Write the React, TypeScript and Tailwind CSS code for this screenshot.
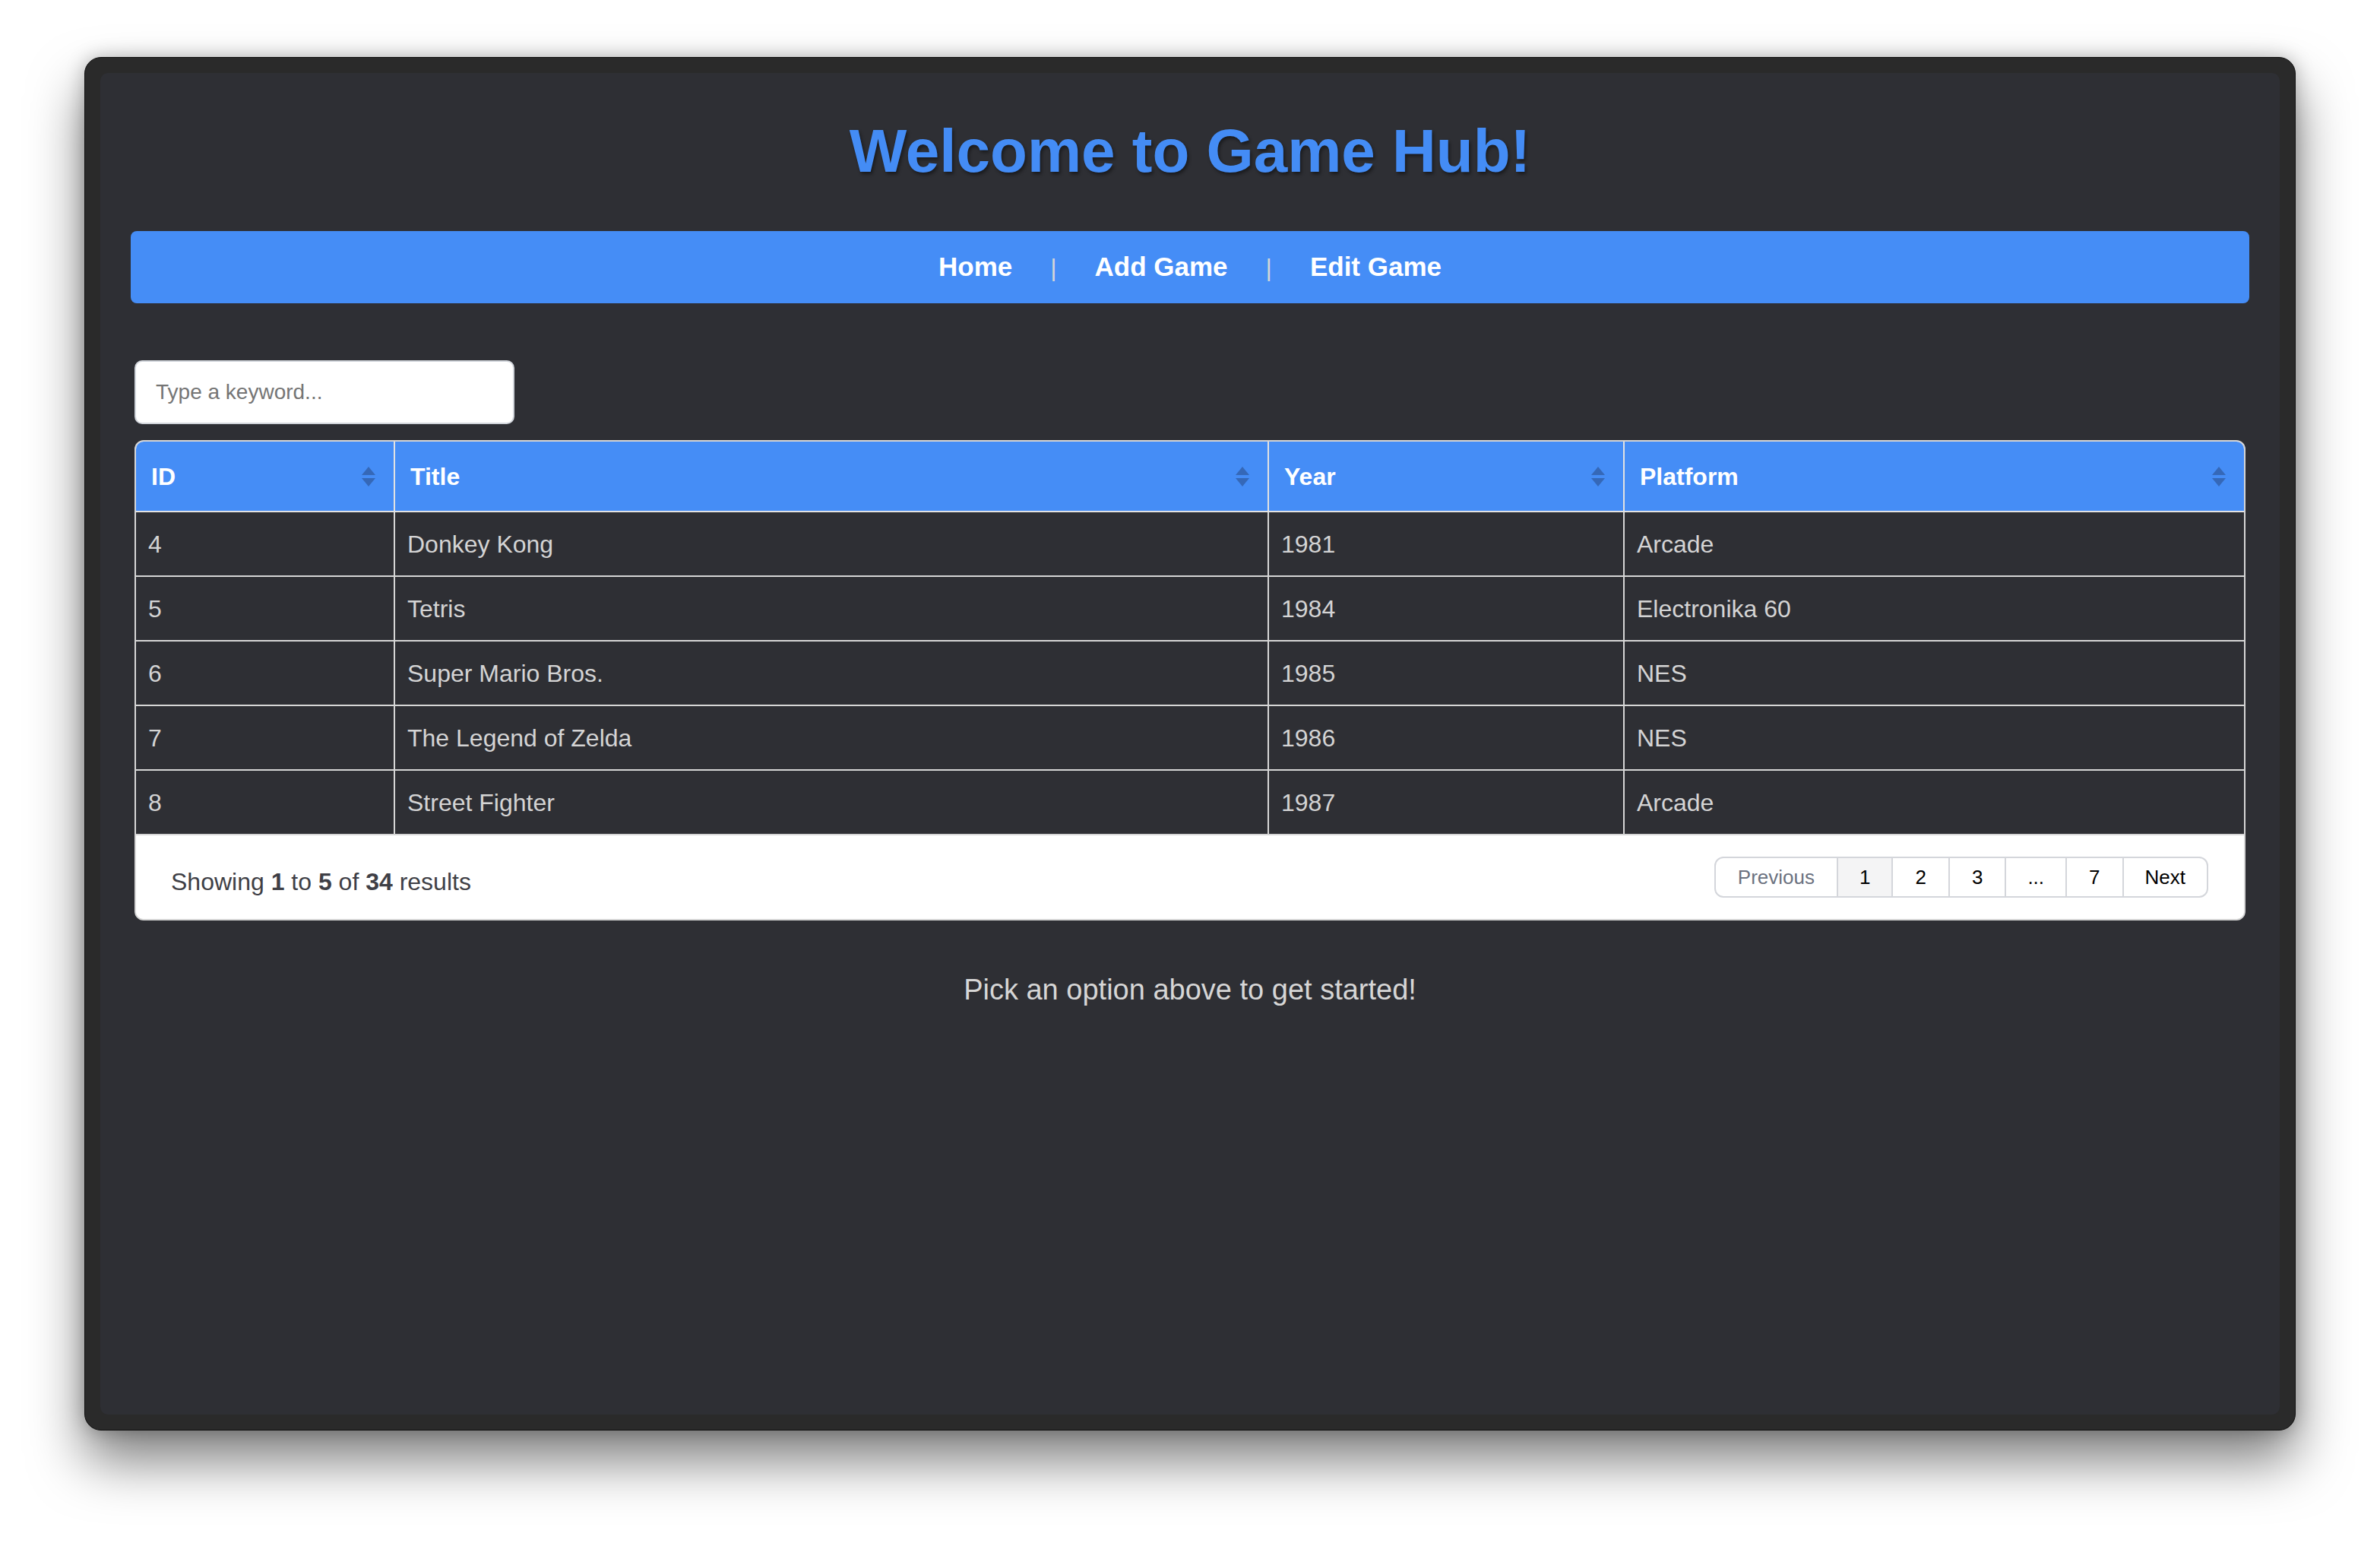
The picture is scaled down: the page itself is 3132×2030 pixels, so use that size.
import React from "react";

const rows = [
  ["4", "Donkey Kong", "1981", "Arcade"],
  ["5", "Tetris", "1984", "Electronika 60"],
  ["6", "Super Mario Bros.", "1985", "NES"],
  ["7", "The Legend of Zelda", "1986", "NES"],
  ["8", "Street Fighter", "1987", "Arcade"],
];

function SortIcon() {
  return (
    <svg width="18" height="26" viewBox="0 0 18 26" className="shrink-0">
      <polygon points="9,0 18,11 0,11" fill="#3568b8" />
      <polygon points="0,15 18,15 9,26" fill="#3568b8" />
    </svg>
  );
}

const headers = ["ID", "Title", "Year", "Platform"];
const widths = ["w-[340px]", "w-[1150px]", "w-[468px]", "w-[816px]"];

export default function App() {
  return (
    <div
      className="w-[3132px] h-[2030px] bg-white pt-[75px] px-[111px] overflow-hidden"
      style={{ fontFamily: '"Liberation Sans", Arial, sans-serif' }}
    >
      <div className="h-[1807px] rounded-[22px] bg-[#2a2a2a] border border-[#0e0e0e] p-[20px] shadow-[0_40px_70px_rgba(0,0,0,0.5),0_0_24px_rgba(0,0,0,0.25)]">
        <div className="h-full rounded-[10px] bg-[#2e2f34] pt-[63px] pl-[40px] pr-[40px]">
          <h1 className="text-center text-[80px] leading-none font-bold text-[#448cf5] [text-shadow:2px_3px_4px_rgba(0,0,0,0.45)]">
            Welcome to Game Hub!
          </h1>

          <nav className="mt-[65px] h-[95px] rounded-[8px] bg-[#458df6] flex items-center justify-center gap-[50px]">
            <span className="text-[35px] font-bold text-white">Home</span>
            <span className="text-[32px] text-[#d6d6d6]">|</span>
            <span className="text-[35px] font-bold text-white">Add Game</span>
            <span className="text-[32px] text-[#d6d6d6]">|</span>
            <span className="text-[35px] font-bold text-white">Edit Game</span>
          </nav>

          <div className="ml-[5px] mr-[5px]">
            <div className="mt-[75px] w-[500px] h-[84px] rounded-[10px] bg-white border-2 border-[#d1d5db] flex items-center pl-[26px]">
              <span className="text-[28px] text-[#757575]">Type a keyword...</span>
            </div>

            <div className="mt-[21px] rounded-[12px] overflow-hidden border-2 border-[#d6d6d6] bg-white">
              <table className="w-full table-fixed border-collapse">
                <colgroup>
                  {widths.map((w, i) => (
                    <col key={i} className={w} />
                  ))}
                </colgroup>
                <thead>
                  <tr className="bg-[#458df6]">
                    {headers.map((h, i) => (
                      <th
                        key={h}
                        className={`h-[92px] p-0 border-b-2 border-[#e2e2e2] ${
                          i < 3 ? "border-r-2" : ""
                        }`}
                      >
                        <div className="flex items-center justify-between pl-[20px] pr-[24px]">
                          <span className="text-[32px] font-bold text-white">{h}</span>
                          <SortIcon />
                        </div>
                      </th>
                    ))}
                  </tr>
                </thead>
                <tbody className="bg-[#2e2f34]">
                  {rows.map((r) => (
                    <tr key={r[0]}>
                      {r.map((c, i) => (
                        <td
                          key={i}
                          className={`h-[85px] py-0 pl-[16px] border-b-2 border-[#d6d6d6] text-[32px] text-[#d4d4d4] text-left ${
                            i < 3 ? "border-r-2" : ""
                          }`}
                        >
                          {c}
                        </td>
                      ))}
                    </tr>
                  ))}
                </tbody>
              </table>
              <div className="h-[110px] flex items-center justify-between pl-[46px] pr-[47px] bg-white">
                <span className="text-[32px] text-[#3f3f46] mt-[12px]">
                  Showing <b>1</b> to <b>5</b> of <b>34</b> results
                </span>
                <div className="flex h-[54px] rounded-[12px] border-2 border-[#d4d6db] overflow-hidden text-[26px]">
                  <span className="px-[29px] flex items-center text-[#6b7280]">Previous</span>
                  <span className="px-[28px] flex items-center border-l-2 border-[#d4d6db] bg-[#f4f4f5] text-black">1</span>
                  <span className="px-[29px] flex items-center border-l-2 border-[#d4d6db] text-black">2</span>
                  <span className="px-[29px] flex items-center border-l-2 border-[#d4d6db] text-black">3</span>
                  <span className="px-[28px] flex items-center border-l-2 border-[#d4d6db] text-black">...</span>
                  <span className="px-[29px] flex items-center border-l-2 border-[#d4d6db] text-black">7</span>
                  <span className="px-[28px] flex items-center border-l-2 border-[#d4d6db] text-black">Next</span>
                </div>
              </div>
            </div>
          </div>

          <p className="mt-[72px] text-center text-[38px] leading-none text-[#d6d6d6]">
            Pick an option above to get started!
          </p>
        </div>
      </div>
    </div>
  );
}
